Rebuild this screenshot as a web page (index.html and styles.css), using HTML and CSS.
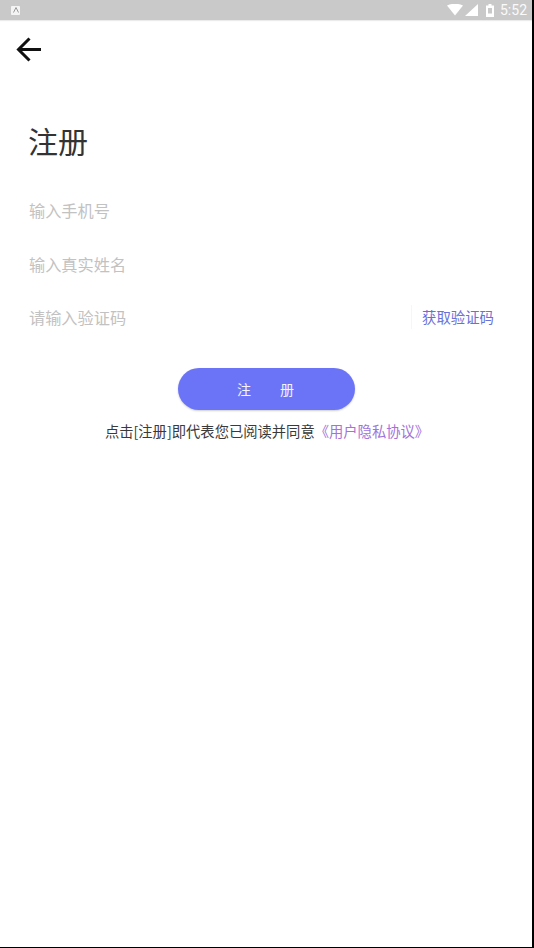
FILE: index.html
```html
<!DOCTYPE html>
<html lang="zh">
<head>
    <meta charset="UTF-8">
    <meta name="viewport" content="width=device-width, initial-scale=1.0">
    <title>注册</title>
    <link rel="stylesheet" href="styles.css">
</head>
<body>
    <div class="screen">
        <div class="status-bar">
            <div class="notice-icon">
                <svg width="8" height="8" viewBox="0 0 8 8"><path d="M1.500 6.500 4 1.500l2.500 5" fill="none" stroke="#999" stroke-width="1"/></svg>
            </div>
            <div class="status-right">
                <svg class="wifi" width="16" height="12" viewBox="0 0 16 12"><path d="M0 1.500Q8 -2 16 1.500L8 11.500Z" fill="#fff"/></svg>
                <svg class="signal" width="13" height="12" viewBox="0 0 13 12"><path d="M0 12 13 0V12Z" fill="#fff"/></svg>
                <svg class="battery" width="8" height="13" viewBox="0 0 8 13"><path d="M2.500 0h3v1.500H8V13H0V1.500h2.500Z" fill="#fff"/><rect x="2" y="4" width="4" height="5.500" fill="#c9c9c9"/></svg>
                <span class="clock">5:52</span>
            </div>
        </div>

        <div class="toolbar">
            <svg width="26" height="26" viewBox="0 0 26 26"><path d="M25 12.500H3M13.500 1.500 2.500 12.500 13.500 23.500" fill="none" stroke="#111" stroke-width="3"/></svg>
        </div>

        <div class="content">
            <h1 class="title">注册</h1>
            <div class="field">输入手机号</div>
            <div class="field">输入真实姓名</div>
            <div class="field field-code">
                <span>请输入验证码</span>
                <span class="get-code">获取验证码</span>
            </div>
            <button class="submit">注<span class="gap"></span>册</button>
            <p class="agreement">点击[注册]即代表您已阅读并同意<span class="agreement-link">《用户隐私协议》</span></p>
        </div>
    </div>
</body>
</html>
```

FILE: styles.css
```css
html, body {
    margin: 0;
    padding: 0;
}
body {
    background: #000;
    font-family: "Noto Sans CJK SC", "Noto Sans", sans-serif;
}
.screen {
    width: 532px;
    height: 947px;
    background: #fff;
    overflow: hidden;
}
.status-bar {
    height: 20px;
    background: #c9c9c9;
    display: flex;
    align-items: center;
    justify-content: space-between;
    padding: 0 5px 0 11px;
    box-shadow: 0 1px 1px rgba(0, 0, 0, 0.08);
}
.notice-icon {
    width: 9px;
    height: 9px;
    background: #f4f4f4;
    border-radius: 1px;
    display: flex;
    align-items: center;
    justify-content: center;
}
.status-right {
    display: flex;
    align-items: center;
    gap: 2px;
}
.status-right .battery {
    margin: 0 4px 0 6px;
}
.clock {
    color: #fafafa;
    font-family: Roboto, sans-serif;
    font-size: 14px;
}
.toolbar {
    height: 59px;
    padding-left: 16px;
    display: flex;
    align-items: center;
}
.content {
    padding: 0 38px 0 28px;
}
.title {
    margin: 37px 0 0;
    font-size: 30px;
    font-weight: 400;
    line-height: 48px;
    color: #333;
}
.field {
    height: 53.500px;
    padding-left: 1px;
    display: flex;
    align-items: center;
    justify-content: space-between;
    font-size: 16.200px;
    color: #c2c2c2;
}
.title + .field {
    margin-top: 19.500px;
}
.get-code {
    border-left: 1px solid #f6f6f6;
    padding-left: 10px;
    font-size: 14.400px;
    line-height: 24px;
    color: #6a70d8;
}
.submit {
    display: flex;
    align-items: center;
    justify-content: center;
    width: 177px;
    height: 42px;
    margin: 24px 0 0 150px;
    padding: 0 8px 0 6px;
    border: none;
    border-radius: 21px;
    background: #6b74f6;
    box-shadow: 0 1px 2px rgba(0, 0, 0, 0.2);
    color: #f4f4ff;
    font-family: inherit;
    font-size: 14px;
}
.gap {
    width: 29px;
}
.agreement {
    margin: 10px 0 0;
    font-size: 14.300px;
    line-height: 22px;
    color: #3a3a3a;
    text-align: center;
    white-space: nowrap;
    padding-left: 12px;
}
.agreement-link {
    color: #a273d8;
}
```
